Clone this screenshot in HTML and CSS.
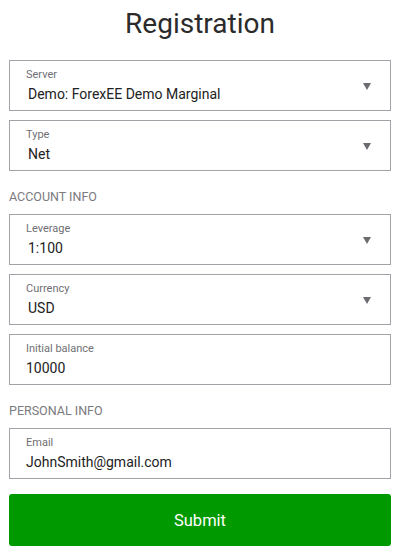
FILE: index.html
```html
<!DOCTYPE html>
<html lang="en">
<head>
    <meta charset="UTF-8">
    <meta name="viewport" content="width=device-width, initial-scale=1.0">
    <title>Registration</title>
    <link rel="stylesheet" href="styles.css">
</head>
<body>
    <div class="container">
        <h1>Registration</h1>
        <form class="form">
            <div class="field select">
                <div class="field-body">
                    <span class="field-label">Server</span>
                    <span class="field-value">Demo: ForexEE Demo Marginal</span>
                </div>
                <svg class="arrow" width="8" height="7" viewBox="0 0 8 7"><polygon points="0,0 8,0 4,7" /></svg>
            </div>
            <div class="field select">
                <div class="field-body">
                    <span class="field-label">Type</span>
                    <span class="field-value">Net</span>
                </div>
                <svg class="arrow" width="8" height="7" viewBox="0 0 8 7"><polygon points="0,0 8,0 4,7" /></svg>
            </div>

            <h3 class="section-title">Account info</h3>
            <div class="field select">
                <div class="field-body">
                    <span class="field-label">Leverage</span>
                    <span class="field-value">1:100</span>
                </div>
                <svg class="arrow" width="8" height="7" viewBox="0 0 8 7"><polygon points="0,0 8,0 4,7" /></svg>
            </div>
            <div class="field select">
                <div class="field-body">
                    <span class="field-label">Currency</span>
                    <span class="field-value">USD</span>
                </div>
                <svg class="arrow" width="8" height="7" viewBox="0 0 8 7"><polygon points="0,0 8,0 4,7" /></svg>
            </div>
            <div class="field">
                <div class="field-body">
                    <span class="field-label">Initial balance</span>
                    <span class="field-value">10000</span>
                </div>
            </div>

            <h3 class="section-title">Personal info</h3>
            <div class="field">
                <div class="field-body">
                    <span class="field-label">Email</span>
                    <span class="field-value">JohnSmith@gmail.com</span>
                </div>
            </div>

            <button type="button" class="submit-button">Submit</button>
        </form>
    </div>
</body>
</html>
```

FILE: styles.css
```css
/* General Styles */
body {
    font-family: Roboto, 'Liberation Sans', sans-serif;
    background: #fff;
    margin: 0;
    padding: 7px 11px 0 9px;
    color: #222;
}

.container {
    width: 382px;
}

h1 {
    margin: 0 0 19px;
    font-size: 28px;
    line-height: 34px;
    font-weight: 400;
    text-align: center;
    color: #2b2b2b;
}

.form {
    display: flex;
    flex-direction: column;
    gap: 9px;
}

/* Fields */
.field {
    display: flex;
    align-items: center;
    height: 51px;
    box-sizing: border-box;
    padding: 7px 19px 7px 16px;
    border: 1px solid #a2a2a8;
    background: white;
}

.field-body {
    flex: 1;
    display: flex;
    flex-direction: column;
    gap: 4px;
}

.field-label {
    font-size: 11px;
    line-height: 13px;
    color: #6f6f74;
}

.field-value {
    font-size: 14px;
    line-height: 18px;
    color: #222;
}

.select .field-value {
    padding-left: 2px;
}

.arrow {
    fill: #6b6b70;
    margin-top: 1px;
}

/* Sections */
.section-title {
    margin: 9px 0 0;
    font-size: 12.5px;
    line-height: 16px;
    font-weight: 400;
    text-transform: uppercase;
    color: #7a7a80;
}

.submit-button {
    margin-top: 6px;
    height: 52px;
    border: none;
    border-radius: 3px;
    background: #009a00;
    color: white;
    font-family: inherit;
    font-size: 16.5px;
    cursor: pointer;
}
```
